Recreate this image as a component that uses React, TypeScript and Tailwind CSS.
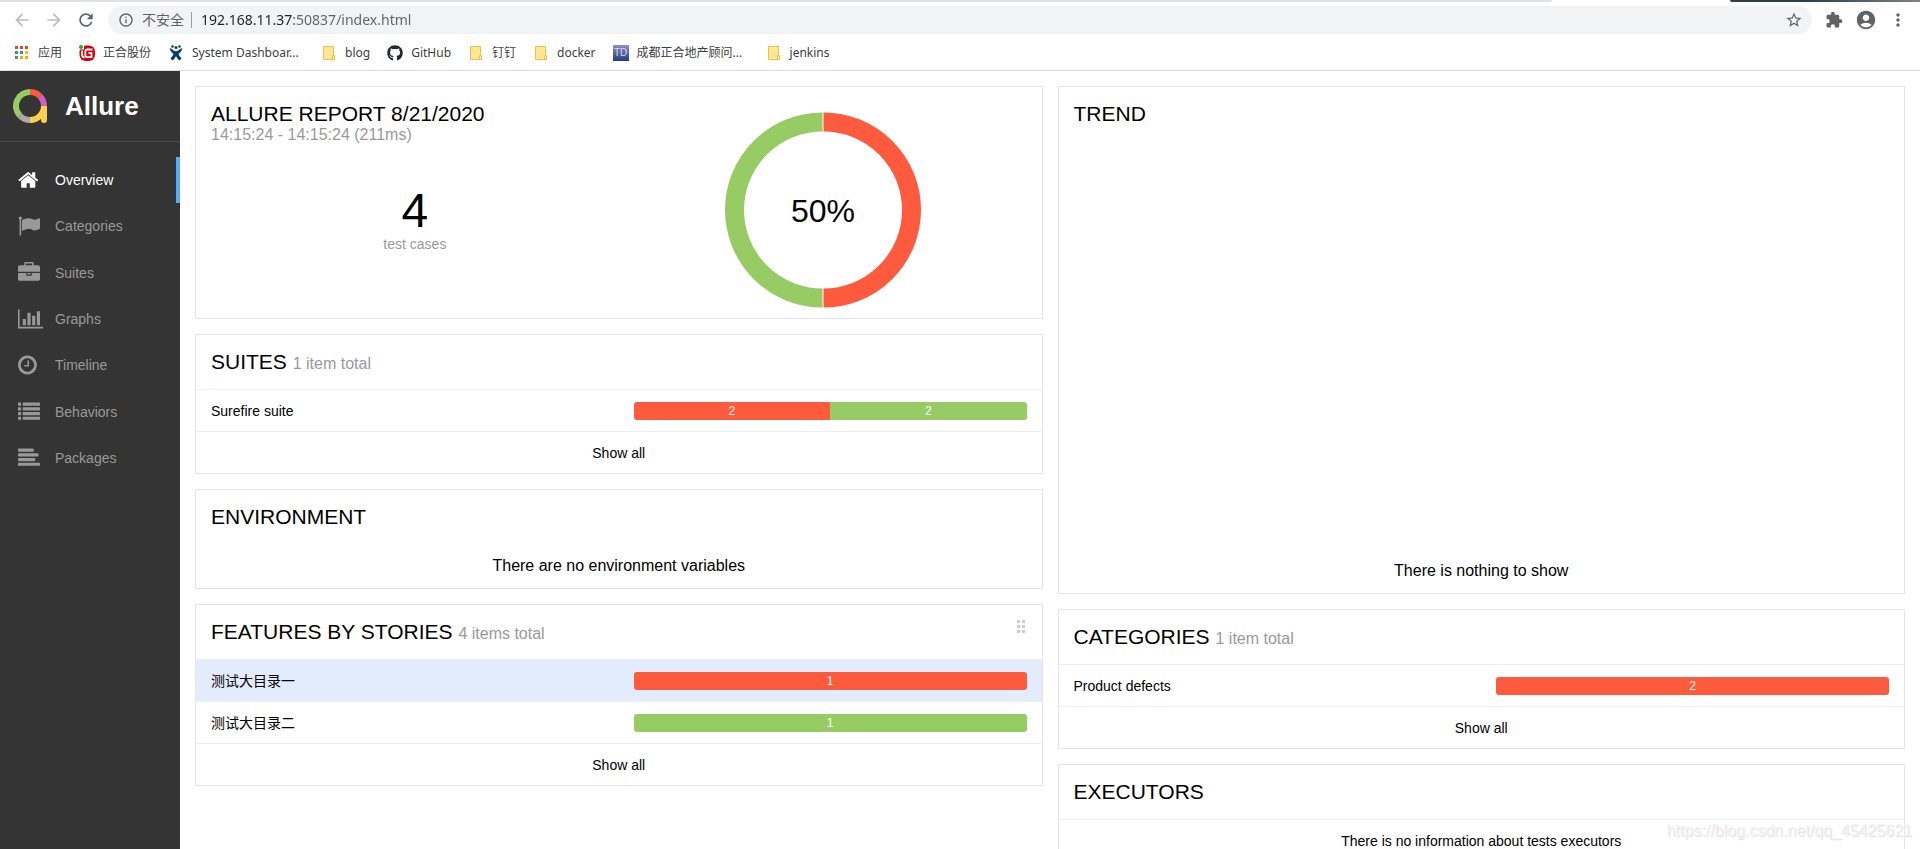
import type { ReactNode } from 'react';
import { FaGithub } from 'react-icons/fa';
import {
  MdAccountCircle,
  MdArrowBack,
  MdArrowForward,
  MdExtension,
  MdInfoOutline,
  MdMoreVert,
  MdRefresh,
  MdStarBorder,
} from 'react-icons/md';

type Segment = { status: 'failed' | 'passed'; count: number };

type Row = { name: string; segments: Segment[]; active?: boolean };

const segmentColors = {
  failed: 'bg-[#fd5a3e]',
  passed: 'bg-[#97cc64]',
};

function AppsIcon() {
  const colors = ['#ea4335', '#ea4335', '#ea4335', '#34a853', '#1a8cff', '#fbbc05', '#34a853', '#f9ab00', '#f9ab00'];
  return (
    <svg viewBox="0 0 16 16" className="size-4" aria-hidden="true">
      {colors.map((color, i) => (
        <rect key={i} x={1 + (i % 3) * 5} y={1 + Math.floor(i / 3) * 5} width="3" height="3" fill={color} />
      ))}
    </svg>
  );
}

function ZhengheIcon() {
  return (
    <svg viewBox="0 0 16 16" className="size-4" aria-hidden="true">
      <rect x="0.5" y="0.5" width="15.5" height="15.5" rx="6" fill="#d7000f" />
      <path d="M0 0h5v4.500h-5z" fill="#fff" />
      <circle cx="2" cy="2" r="2" fill="#1faa1f" />
      <path d="M3 5.500v4q0 2.700 2.500 3M13.500 4.500H8.500q-2.200 0-2.200 2.200v3.300q0 2.200 2.200 2.200h4V8.200H9.500" fill="none" stroke="#fff" strokeWidth="1.800" />
    </svg>
  );
}

function JiraIcon() {
  return (
    <svg viewBox="0 0 16 16" className="size-4" fill="#0b3a70" aria-hidden="true">
      <circle cx="4.500" cy="1.500" r="1.300" />
      <circle cx="8" cy="2.500" r="1.500" />
      <circle cx="11.500" cy="1.500" r="1.300" />
      <path d="M1.500 3.200q2.500.3 3.500 1.700 1 1.300 3 1.300t3-1.300q1-1.400 3.500-1.700-.5 3-4 6 1 2.300 3 4.200l-2 2.100q-2.200-1.700-3.500-4.200-1.300 2.500-3.500 4.200l-2-2.100q2-1.900 3-4.200-3.500-3-4-6z" />
    </svg>
  );
}

function FolderIcon() {
  return (
    <svg viewBox="0 0 16 16" className="size-4" aria-hidden="true">
      <path d="M2.500 1.500h10v9h1v4h-11z" fill="#ffe694" stroke="#e8c44e" />
      <path d="M11.500 14.500v-4h1.500" fill="none" stroke="#e8c44e" />
    </svg>
  );
}

function TdIcon() {
  return (
    <span className="flex size-4 items-center justify-center bg-linear-to-b from-[#8b93c4] to-[#2c3b7c] font-[Liberation_Sans,sans-serif] text-[10px] leading-none text-[#d5d9ee]">
      TD
    </span>
  );
}

function AllureLogo() {
  return (
    <svg viewBox="0 0 34 34" className="size-[34px]" fill="none" strokeWidth="6" aria-hidden="true">
      <path d="M7.100 26.900A14 14 0 0 1 17 3" stroke="#97cc64" />
      <path d="M17 3a14 14 0 0 1 9.900 4.100" stroke="#fd5a3e" />
      <path d="M26.900 7.100A14 14 0 0 1 31 17" stroke="#d35ebe" />
      <path d="M17 31a14 14 0 0 1-9.900-4.100" stroke="#aaa" />
      <path d="M31 17a14 14 0 0 1-14 14" stroke="#ffd050" />
      <path d="M31 17v14" stroke="#ffd050" strokeLinecap="butt" />
      <circle cx="31" cy="31" r="3" fill="#ffd050" stroke="none" />
    </svg>
  );
}

function HomeIcon() {
  return (
    <svg viewBox="64 0 1664 1792" className="h-[22px]" fill="currentColor" aria-hidden="true">
      <path d="M1472 992v480q0 26-19 45t-45 19h-384v-384h-256v384h-384q-26 0-45-19t-19-45v-480q0-1 .5-3t.5-3l575-474 575 474q1 2 1 6zm223-69l-62 74q-8 9-21 11h-3q-13 0-21-7l-692-577-692 577q-12 8-24 7-13-2-21-11l-62-74q-8-10-7-23.500t11-21.500l719-599q32-26 76-26t76 26l244 204v-195q0-14 9-23t23-9h192q14 0 23 9t9 23v408l219 182q10 8 11 21.500t-7 23.500z" />
    </svg>
  );
}

function FlagIcon() {
  return (
    <svg viewBox="0 0 1792 1792" className="h-[22px]" fill="currentColor" aria-hidden="true">
      <path d="M320 256q0 72-64 110v1266q0 13-9.500 22.500t-22.500 9.500h-64q-13 0-22.500-9.500t-9.500-22.500v-1266q-64-38-64-110 0-53 37.500-90.500t90.500-37.500 90.500 37.500 37.500 90.500zm1472 64v763q0 25-12.500 38.500t-39.500 27.500q-215 116-369 116-61 0-123.500-22t-108.500-48-115.500-48-142.500-22q-192 0-464 146-17 9-33 9-26 0-45-19t-19-45v-742q0-32 31-55 21-14 79-43 236-120 421-120 107 0 200 29t219 88q38 19 88 19 54 0 117.500-21t110-47 88-47 54.500-21q26 0 45 19t19 45z" />
    </svg>
  );
}

function BriefcaseIcon() {
  return (
    <svg viewBox="0 0 1792 1792" className="h-[22px]" fill="currentColor" aria-hidden="true">
      <path d="M640 256h512v-128h-512v128zm1152 640v480q0 66-47 113t-113 47h-1472q-66 0-113-47t-47-113v-480h672v160q0 26 19 45t45 19h320q26 0 45-19t19-45v-160h672zm-768 0v128h-256v-128h256zm768-480v384h-1792v-384q0-66 47-113t113-47h352v-160q0-40 28-68t68-28h576q40 0 68 28t28 68v160h352q66 0 113 47t47 113z" />
    </svg>
  );
}

function ChartIcon() {
  return (
    <svg viewBox="0 0 2048 1792" className="h-[22px]" fill="currentColor" aria-hidden="true">
      <path d="M640 896v512h-256v-512h256zm384-512v1024h-256v-1024h256zm1024 1152v128h-2048v-1536h128v1408h1920zm-640-896v768h-256v-768h256zm384-384v1152h-256v-1152h256z" />
    </svg>
  );
}

function ClockIcon() {
  return (
    <svg viewBox="128 0 1536 1792" className="h-[22px]" fill="currentColor" aria-hidden="true">
      <path d="M1024 544v448q0 14-9 23t-23 9h-320q-14 0-23-9t-9-23v-64q0-14 9-23t23-9h224v-352q0-14 9-23t23-9h64q14 0 23 9t9 23zm416 352q0-148-73-273t-198-198-273-73-273 73-198 198-73 273 73 273 198 198 273 73 273-73 198-198 73-273zm224 0q0 209-103 385.500t-279.500 279.500-385.500 103-385.500-103-279.500-279.500-103-385.500 103-385.500 279.500-279.500 385.500-103 385.500 103 279.500 279.500 103 385.500z" />
    </svg>
  );
}

function ListIcon() {
  return (
    <svg viewBox="0 0 1792 1792" className="h-[22px]" fill="currentColor" aria-hidden="true">
      {[128, 512, 896, 1280].map((y) => (
        <g key={y}>
          <rect x="0" y={y} width="256" height="256" rx="32" />
          <rect x="384" y={y} width="1408" height="256" rx="32" />
        </g>
      ))}
    </svg>
  );
}

function AlignLeftIcon() {
  return (
    <svg viewBox="0 0 1792 1792" className="h-[22px]" fill="currentColor" aria-hidden="true">
      {[1280, 1664, 1408, 1792].map((width, i) => (
        <rect key={width} x="0" y={128 + i * 384} width={width} height="256" rx="64" />
      ))}
    </svg>
  );
}

const bookmarks = [
  { label: '应用', icon: <AppsIcon />, width: '' },
  { label: '正合股份', icon: <ZhengheIcon />, width: '' },
  { label: 'System Dashboar...', icon: <JiraIcon />, width: 'w-[112px]' },
  { label: 'blog', icon: <FolderIcon />, width: '' },
  { label: 'GitHub', icon: <FaGithub className="size-4 text-[#24292e]" />, width: '' },
  { label: '钉钉', icon: <FolderIcon />, width: '' },
  { label: 'docker', icon: <FolderIcon />, width: '' },
  { label: '成都正合地产顾问...', icon: <TdIcon />, width: 'w-[112px]' },
  { label: 'jenkins', icon: <FolderIcon />, width: '' },
];

const navItems = [
  { label: 'Overview', icon: <HomeIcon />, active: true },
  { label: 'Categories', icon: <FlagIcon /> },
  { label: 'Suites', icon: <BriefcaseIcon /> },
  { label: 'Graphs', icon: <ChartIcon /> },
  { label: 'Timeline', icon: <ClockIcon /> },
  { label: 'Behaviors', icon: <ListIcon /> },
  { label: 'Packages', icon: <AlignLeftIcon /> },
];

function ToolbarButton({ label, className = 'text-[#5f6368]', children }: { label: string; className?: string; children: ReactNode }) {
  return (
    <button type="button" aria-label={label} className={`flex size-5 shrink-0 items-center justify-center ${className}`}>
      {children}
    </button>
  );
}

function BrowserBar() {
  return (
    <header className="shrink-0 border-b border-[#d9dadb] bg-white font-[Noto_Sans,Noto_Sans_CJK_SC,sans-serif]">
      <div className="flex h-0.5">
        <div className="flex-1 rounded-br-sm bg-[#dee1e6]" />
        <div className="w-[178px]" />
        <div className="w-[190px] rounded-bl-sm bg-linear-to-r from-[#2c3e4c] from-40% to-[#7d868d]" />
      </div>
      <div className="flex items-center gap-3 px-3 pt-1">
        <ToolbarButton label="Back" className="text-[#babcbe]">
          <MdArrowBack className="size-5" />
        </ToolbarButton>
        <ToolbarButton label="Forward" className="text-[#babcbe]">
          <MdArrowForward className="size-5" />
        </ToolbarButton>
        <ToolbarButton label="Reload">
          <MdRefresh className="size-5" />
        </ToolbarButton>
        <div className="flex h-7 flex-1 items-center rounded-full bg-[#f1f3f4] pr-2 pl-2.5 text-sm text-[#5f6368]">
          <MdInfoOutline className="size-4 shrink-0" />
          <span className="ml-2 whitespace-nowrap">不安全</span>
          <span className="mr-[9px] ml-[7px] h-4 w-px bg-[#9aa0a6]" />
          {/* host part is darker than port and path */}
          <input
            type="text"
            aria-label="Address"
            defaultValue="192.168.11.37:50837/index.html"
            className="min-w-0 flex-1 bg-[linear-gradient(to_right,#202124_92px,#5f6368_92px)] bg-clip-text text-transparent outline-none"
          />
          <ToolbarButton label="Bookmark this page">
            <MdStarBorder className="size-[18px]" />
          </ToolbarButton>
        </div>
        <ToolbarButton label="Extensions">
          <MdExtension className="size-[18px]" />
        </ToolbarButton>
        <ToolbarButton label="Profile">
          <MdAccountCircle className="size-[22px] shrink-0" />
        </ToolbarButton>
        <ToolbarButton label="Menu">
          <MdMoreVert className="size-5" />
        </ToolbarButton>
      </div>
      <nav aria-label="Bookmarks" className="flex h-9 items-center gap-[17px] px-3.5 pt-0.5 text-xs text-[#3c4043]">
        {bookmarks.map((bookmark) => (
          <a key={bookmark.label} href="#" className="flex items-center gap-2 whitespace-nowrap">
            {bookmark.icon}
            <span className={bookmark.width}>{bookmark.label}</span>
          </a>
        ))}
      </nav>
    </header>
  );
}

function SideNav() {
  return (
    <aside className="w-[180px] shrink-0 bg-[#343434]">
      <a href="#" className="flex h-[71px] items-center gap-[18px] border-b border-[#4d4d4d] px-[13px] text-[26px] font-bold text-white">
        <AllureLogo />
        Allure
      </a>
      <nav className="mt-[15px] grid h-[324px] auto-rows-fr text-sm">
        {navItems.map((item) => (
          <a
            key={item.label}
            href="#"
            aria-current={item.active ? 'page' : undefined}
            className={`flex items-center border-r-4 pl-[18px] ${item.active ? 'border-[#5aaaf5] text-white' : 'border-transparent text-[#999]'}`}
          >
            <span className="w-[37px]">{item.icon}</span>
            {item.label}
          </a>
        ))}
      </nav>
    </aside>
  );
}

function Card({ children }: { children: ReactNode }) {
  return <section className="border border-[#e5e5e5] bg-white">{children}</section>;
}

function CardHeader({ title, total, handle }: { title: string; total?: string; handle?: boolean }) {
  return (
    <div className="flex justify-between p-[15px]">
      <h2 className="text-[21px] leading-6 uppercase">
        {title} {total ? <span className="text-base leading-none text-[#999] normal-case">{total}</span> : null}
      </h2>
      {handle ? (
        <button type="button" aria-label="Move widget" className="self-start px-0.5">
          <svg viewBox="0 0 8 13" className="h-[13px] w-2" fill="#ccc">
            {[0, 5, 10].map((y) => (
              <g key={y}>
                <rect x="0" y={y} width="3" height="3" />
                <rect x="5" y={y} width="3" height="3" />
              </g>
            ))}
          </svg>
        </button>
      ) : null}
    </div>
  );
}

function StatusBar({ segments }: { segments: Segment[] }) {
  return (
    <span className="flex h-[18px] overflow-hidden rounded-[3px] text-center text-xs leading-[18px] text-white">
      {segments.map((segment) => (
        <span key={segment.status} className={segmentColors[segment.status]} style={{ flexGrow: segment.count }}>
          {segment.count}
        </span>
      ))}
    </span>
  );
}

function ListWidget({ title, total, rows, handle }: { title: string; total: string; rows: Row[]; handle?: boolean }) {
  return (
    <Card>
      <CardHeader title={title} total={total} handle={handle} />
      {rows.map((row) => (
        <a
          key={row.name}
          href="#"
          className={`grid h-[42px] grid-cols-2 items-center border-t border-[#eceff1] text-sm ${row.active ? 'bg-[#e3ecfd]' : ''}`}
        >
          <span className="px-[15px]">{row.name}</span>
          <span className="px-[15px]">
            <StatusBar segments={row.segments} />
          </span>
        </a>
      ))}
      <a href="#" className="flex h-[42px] items-center justify-center border-t border-[#eceff1] text-sm">
        Show all
      </a>
    </Card>
  );
}

function SummaryWidget() {
  return (
    <Card>
      <div className="grid grid-cols-2 px-[15px]">
        <div className="pt-[15px]">
          <h2 className="text-[21px] leading-6 uppercase">Allure report 8/21/2020</h2>
          <p className="text-base leading-[18px] text-[#999]">14:15:24 - 14:15:24 (211ms)</p>
          <div className="mt-[43px] text-center">
            <p className="text-5xl leading-[48px]">4</p>
            <p className="text-sm leading-[18px] text-[#999]">test cases</p>
          </div>
        </div>
        <div className="flex justify-center pt-[25px] pb-2.5">
          <svg viewBox="0 0 196 196" className="size-[196px]" fill="none" strokeWidth="19" role="img" aria-label="50% passed">
            <path d="M98.500 10a88 88 0 0 1 0 176" stroke="#fd5a3e" />
            <path d="M97.500 10a88 88 0 0 0 0 176" stroke="#97cc64" />
            <text x="98" y="110" textAnchor="middle" fontSize="32" fill="#000">
              50%
            </text>
          </svg>
        </div>
      </div>
    </Card>
  );
}

export default function App() {
  return (
    <div className="relative flex h-screen flex-col overflow-hidden bg-white font-[Liberation_Sans,Noto_Sans_CJK_SC,sans-serif] text-black">
      <BrowserBar />
      <div className="flex min-h-0 flex-1">
        <SideNav />
        <main className="grid flex-1 grid-cols-2 items-start gap-[15px] overflow-hidden p-[15px]">
          <div className="grid gap-[15px]">
            <SummaryWidget />
            <ListWidget
              title="Suites"
              total="1 item total"
              rows={[
                {
                  name: 'Surefire suite',
                  segments: [
                    { status: 'failed', count: 2 },
                    { status: 'passed', count: 2 },
                  ],
                },
              ]}
            />
            <Card>
              <CardHeader title="Environment" />
              <p className="py-2.5 text-center text-base leading-6">There are no environment variables</p>
            </Card>
            <ListWidget
              title="Features by stories"
              total="4 items total"
              handle
              rows={[
                { name: '测试大目录一', segments: [{ status: 'failed', count: 1 }], active: true },
                { name: '测试大目录二', segments: [{ status: 'passed', count: 1 }] },
              ]}
            />
          </div>
          <div className="grid gap-[15px]">
            <Card>
              <CardHeader title="Trend" />
              <div className="flex h-[452px] items-end justify-center pb-2.5 text-base leading-6">There is nothing to show</div>
            </Card>
            <ListWidget
              title="Categories"
              total="1 item total"
              rows={[{ name: 'Product defects', segments: [{ status: 'failed', count: 2 }] }]}
            />
            <Card>
              <CardHeader title="Executors" />
              <p className="flex h-[42px] items-center justify-center border-t border-[#eceff1] text-sm">
                There is no information about tests executors
              </p>
            </Card>
          </div>
        </main>
      </div>
      <span className="pointer-events-none absolute right-2 bottom-2 text-base leading-5 text-[#f3f3f3] [text-shadow:1px_1px_1px_#dedede]">
        https://blog.csdn.net/qq_45425621
      </span>
    </div>
  );
}
